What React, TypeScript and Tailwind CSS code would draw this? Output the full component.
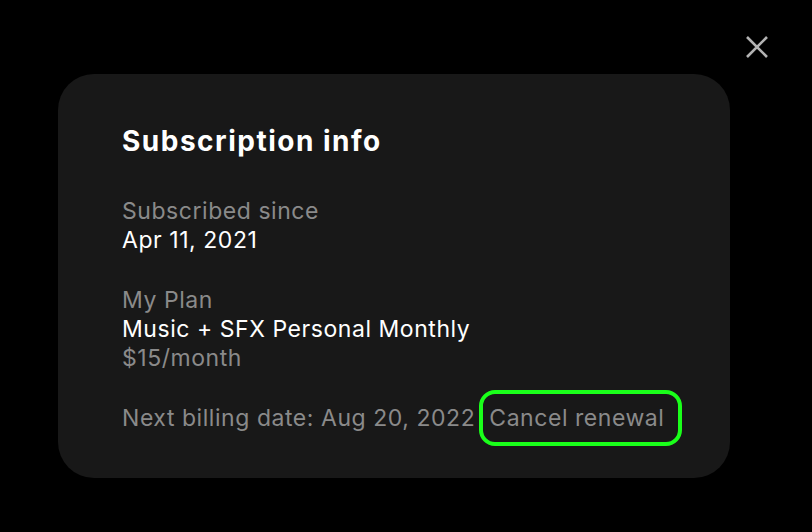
export default function App() {
  return (
    <div
      className="relative h-[532px] w-[812px] overflow-hidden bg-black"
      style={{ fontFamily: "Inter, 'Noto Sans', sans-serif" }}
    >
      <button className="absolute left-[745px] top-[35px] flex h-6 w-6 items-center justify-center text-[#b3b3b3]">
        <svg width="24" height="24" viewBox="0 0 24 24" fill="none">
          <path
            d="M2 2L22 22M22 2L2 22"
            stroke="currentColor"
            strokeWidth="2.6"
            strokeLinecap="butt"
          />
        </svg>
      </button>

      <div className="ml-[58px] mt-[74px] flex h-[404px] w-[672px] flex-col rounded-[36px] bg-[#181818] pl-[64px] pt-[49px]">
        <h2 className="text-[28px] font-bold leading-[36px] tracking-[1.5px] text-white">
          Subscription info
        </h2>

        <div className="mt-[38px] text-[23px] leading-[29px] tracking-[0.55px]">
          <div className="text-[#8a8a8a]">Subscribed since</div>
          <div className="text-white">Apr 11, 2021</div>
        </div>

        <div className="mt-[31px] text-[23px] leading-[29px] tracking-[0.55px]">
          <div className="text-[#8a8a8a]">My Plan</div>
          <div className="text-white">Music + SFX Personal Monthly</div>
          <div className="text-[#8a8a8a]">$15/month</div>
        </div>

        <div className="mt-[17px] flex items-center text-[23px] leading-[29px] tracking-[0.55px] text-[#8a8a8a]">
          <span>Next billing date: Aug 20, 2022</span>
          <button className="ml-[4px] rounded-[16px] border-[4px] border-[#1aff1a] pb-[9px] pl-[6px] pr-[14px] pt-[10px] leading-[29px] tracking-[0.55px] text-[#8a8a8a]">
            Cancel renewal
          </button>
        </div>
      </div>
    </div>
  );
}
